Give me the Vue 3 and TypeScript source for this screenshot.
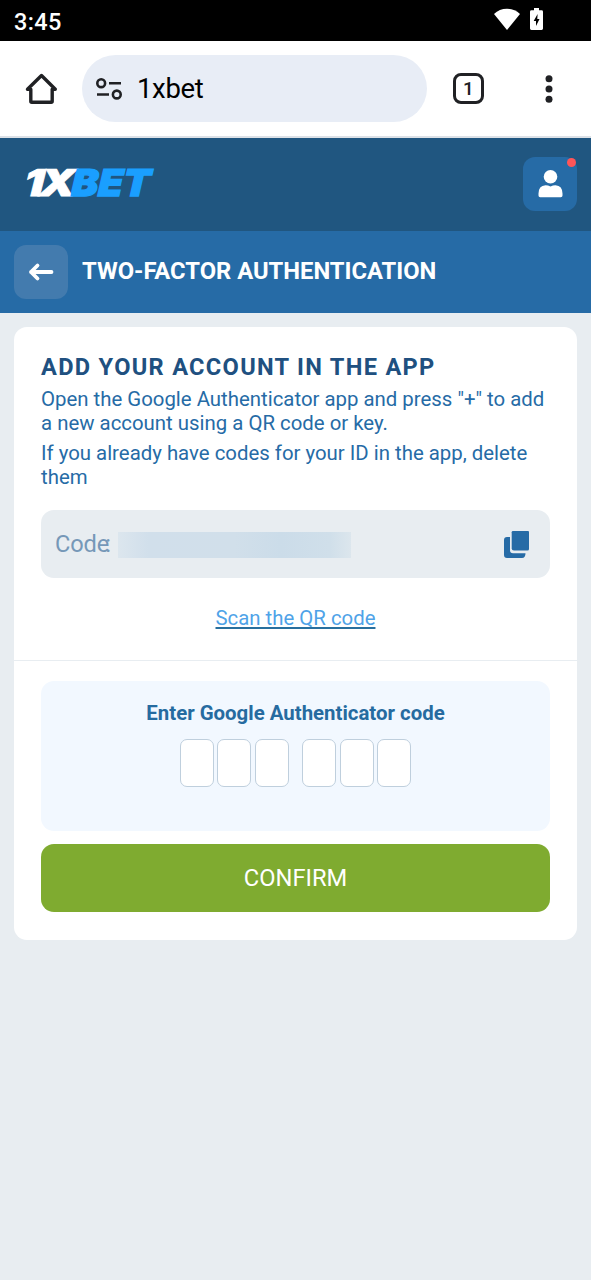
<script setup lang="ts">
import { ref } from 'vue'

const instructions: string[][] = [
  ['Open the Google Authenticator app and press "+" to add', 'a new account using a QR code or key.'],
  ['If you already have codes for your ID in the app, delete', 'them'],
]
const groups = ref<string[][]>([['', '', ''], ['', '', '']])
</script>

<template>
  <div class="screen">
    <div class="status">
      <span class="clock">3:45</span>
      <div class="status-icons">
        <svg class="wifi" width="26" height="22" viewBox="0 0 26 22"><path d="M0 6Q5.4 .8 13 .8t13 5.200L13 22z" fill="#fff" /></svg>
        <svg class="battery" width="13" height="22" viewBox="0 0 13 22"><path d="M4 0h5v2.3h2.6Q13 2.3 13 3.7v16.9Q13 22 11.6 22H1.4Q0 22 0 20.600V3.700Q0 2.300 1.400 2.300H4z" fill="#fff" /><path d="M7.600 6L3.700 12.900H6V18l3.500-6.900H7.300z" fill="#000" /></svg>
      </div>
    </div>
    <div class="browser">
      <svg class="home" width="32" height="32" viewBox="0 0 32 32" fill="none" stroke="#202124" stroke-width="3.4" stroke-linejoin="round"><path d="M2.500 16.200H5.800V28.200Q5.800 29.200 6.800 29.200H26.200Q27.200 29.200 27.200 28.200V16.200H30.300L16.500 2.500z" /></svg>
      <div class="address">
        <svg width="26" height="22" viewBox="0 0 26 22" fill="none" stroke="#202124" stroke-width="2.600"><circle cx="5.200" cy="5.200" r="3.900" /><path d="M13 5.200H25M1 16.500H13" /><circle cx="20.800" cy="16.500" r="3.900" /></svg>
        <span class="url">1xbet</span>
      </div>
      <div class="tabs">1</div>
      <svg class="more" width="8" height="28" viewBox="0 0 8 28" fill="#202124"><circle cx="4" cy="3.700" r="3.500" /><circle cx="4" cy="14" r="3.500" /><circle cx="4" cy="24.300" r="3.500" /></svg>
    </div>
    <header class="brand">
      <svg class="logo" width="132" height="32" viewBox="0 0 132 32">
        <text class="logo-text" transform="translate(-1.500 27.200) skewX(-3)" fill="#fff" stroke="#fff" stroke-width=".8" textLength="20" lengthAdjust="spacingAndGlyphs">1</text>
        <text class="logo-text" transform="translate(14 27.200) skewX(-3)" fill="#fff" stroke="#fff" stroke-width=".8" textLength="36" lengthAdjust="spacingAndGlyphs">X</text>
        <text class="logo-text" transform="translate(46 27.200) skewX(-3)" fill="#1a9fff" stroke="#1a9fff" stroke-width="1.400" textLength="79" lengthAdjust="spacingAndGlyphs">BET</text>
      </svg>
      <div class="profile">
        <svg width="26" height="28" viewBox="0 0 26 28" fill="#fff"><circle cx="13.500" cy="6.800" r="6.800" /><path d="M8.500 15.200Q11 15.200 13.500 16.500Q16 15.200 18.500 15.200Q25.500 15.800 25.500 23.500V25.500Q25.500 27.200 23.800 27.200H3.200Q1.500 27.200 1.500 25.500V23.500Q1.500 15.800 8.500 15.200z" /></svg>
        <i class="notice"></i>
      </div>
    </header>
    <div class="titlebar">
      <div class="back">
        <svg width="26" height="20" viewBox="0 0 26 20" fill="none" stroke="#fff" stroke-width="3.800" stroke-linecap="round" stroke-linejoin="round"><path d="M23.500 10H3M9.500 3.500L3 10L9.500 16.500" /></svg>
      </div>
      <h1>TWO-FACTOR AUTHENTICATION</h1>
    </div>
    <main class="card">
      <section class="account">
        <h2>ADD YOUR ACCOUNT IN THE APP</h2>
        <p v-for="(lines, i) in instructions" :key="i"><span v-for="line in lines" :key="line">{{ line }}</span></p>
        <div class="secret">
          <span class="label">Cod<span class="tight">e</span>:</span>
          <span class="mask"></span>
          <svg class="copy" width="26" height="28" viewBox="0 0 26 28" fill="#266ba6"><path d="M6 6H3Q0 6 0 9V24Q0 27 3 27H18Q21.500 27 21.500 22.200H9Q6 22.200 6 19.200z" /><path d="M9 0H24Q25 0 25 1V18Q25 19.500 23.500 19.500H10Q7.700 19.500 7.700 17.200V1.300Q7.700 0 9 0z" /></svg>
        </div>
        <a class="scan">Scan the QR code</a>
      </section>
      <section class="verify">
        <div class="panel">
          <h3>Enter Google Authenticator code</h3>
          <div class="digits">
            <div v-for="(group, g) in groups" :key="g" class="group">
              <input v-for="(_, d) in group" :key="d" v-model="group[d]" maxlength="1" inputmode="numeric" />
            </div>
          </div>
        </div>
        <button>CONFIRM</button>
      </section>
    </main>
  </div>
</template>

<style>
body { margin: 0; background: #e8edf1; }
</style>
<style scoped>
* { box-sizing: border-box; }
.screen { height: 1280px; overflow: hidden; background: #e8edf1; font-family: Roboto, "Liberation Sans", sans-serif; }
.status { height: 41px; background: #000; color: #fff; display: flex; justify-content: space-between; padding: 0 47px 0 14px; }
.clock { font-size: 23.500px; line-height: 44px; font-weight: 500; letter-spacing: .35px; }
.status-icons { display: flex; gap: 10px; padding-top: 8px; margin-right: 1px; }
.browser { height: 97px; background: #fff; border-bottom: 2px solid #dce1e7; display: flex; align-items: center; padding: 0 38px 0 25px; }
.home { flex: none; }
.address { width: 345px; height: 67px; border-radius: 34px; margin-left: 25px; background: #e8edf6; display: flex; align-items: center; padding-left: 14px; gap: 15px; }
.url { font-size: 27.500px; line-height: 34px; letter-spacing: -.35px; color: #000; }
.tabs { width: 31px; height: 31px; margin-left: 26px; border: 3.5px solid #202124; border-radius: 8px; color: #202124; font-size: 19px; font-weight: 500; line-height: 25px; text-align: center; }
.more { margin-left: auto; }
.brand { height: 93px; background: #205680; display: flex; align-items: center; justify-content: space-between; padding: 0 14px 0 25px; }
.logo { overflow: visible; }
.logo-text { font-family: Inter, sans-serif; font-size: 37px; font-weight: 900; font-style: italic; }
.profile { position: relative; width: 54px; height: 54px; margin-bottom: 2px; border-radius: 12px; background: #266ba6; display: flex; align-items: center; justify-content: center; }
.notice { position: absolute; right: 1px; top: 1px; width: 9px; height: 9px; border-radius: 50%; background: #ff5558; }
.titlebar { height: 82px; background: #266ba6; display: flex; align-items: center; gap: 14px; padding-left: 14px; }
.back { width: 54px; height: 54px; border-radius: 12px; background: #437bae; display: flex; align-items: center; justify-content: center; }
h1 { margin: 0 0 2px; color: #fff; font-size: 23.750px; line-height: 30px; font-weight: 700; white-space: nowrap; }
.card { margin: 14px; height: 613px; background: #fff; border-radius: 13px; }
.account { height: 334px; padding: 26px 27px 0; border-bottom: 1px solid #e8edf1; }
h2 { margin: 0 0 6px; color: #205080; font-size: 23.600px; line-height: 28px; font-weight: 700; letter-spacing: 1.300px; white-space: nowrap; }
p { margin: 0 0 6px; color: #266ba6; font-size: 20.390px; line-height: 24px; }
p span { display: block; white-space: nowrap; }
.secret { height: 68px; margin-top: 21px; border-radius: 13px; background: #e8edf1; display: flex; align-items: center; padding: 0 20px 0 14px; }
.label { width: 63px; color: #7698b8; font-size: 23.600px; line-height: 28px; letter-spacing: -.1px; }
.tight { letter-spacing: -4px; }
.mask { width: 233px; height: 26px; margin-top: 2px; background: linear-gradient(90deg, #dce6ee, #d1dfeb 13%, #d1dfea 50%, #cbdce9 70%, #d0dfea 91%, #dce6ed); }
.copy { margin: 2px 0 0 auto; }
.scan { display: block; width: fit-content; margin: 28px auto 0; color: #4fa3e8; font-size: 20.370px; line-height: 24px; text-decoration: underline; text-decoration-color: #286f9e; text-decoration-thickness: 2px; text-underline-offset: 2px; text-decoration-skip-ink: none; white-space: nowrap; }
.verify { padding: 20px 27px 0; }
.panel { height: 150px; border-radius: 13px; background: #f2f8ff; padding-top: 20px; }
h3 { margin: 0; text-align: center; color: #266ba0; font-size: 20.400px; line-height: 24px; font-weight: 700; }
.digits { display: flex; justify-content: center; gap: 13.400px; margin-top: 14px; }
.group { display: flex; gap: 3.400px; }
input { width: 34px; height: 48px; border: 1px solid #bfcfdd; border-radius: 7px; padding: 0; background: #fff; text-align: center; font: 20px Roboto, sans-serif; color: #266ba6; }
button { display: block; width: 100%; height: 68px; margin-top: 13px; border: 0; border-radius: 13px; background: #7fab30; color: #fff; font: 400 23.700px Roboto, sans-serif; }
</style>
